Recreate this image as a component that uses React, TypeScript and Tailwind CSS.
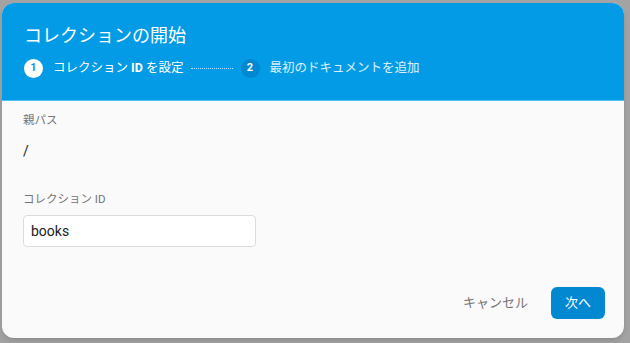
import React from 'react'

const FONT = { fontFamily: 'Roboto, "Noto Sans CJK JP", sans-serif' }

export default function App() {
  return (
    <div className="w-[630px] h-[343px] bg-[#a3a3a3] pt-[3px] pl-[2px]" style={FONT}>
      <div className="w-[622px] h-[335px] rounded-[12px] overflow-hidden bg-[#fafafa] flex flex-col shadow-md">
        {/* Header */}
        <div className="bg-[#039be5] h-[98px] px-[22px] pt-[21px] border-b border-[#4fc3f7]">
          <h1 className="text-white text-[18px] leading-[24px]">コレクションの開始</h1>
          <div className="flex items-center mt-[10px] h-[20px]">
            <span className="w-[19px] h-[19px] rounded-full bg-white text-[#039be5] text-[11px] font-bold flex items-center justify-center">1</span>
            <span className="ml-[10px] text-white text-[12.5px]">
              コレクション <b className="font-bold">ID</b> を設定
            </span>
            <span className="ml-[7px] w-[42px] border-t border-dotted border-[#b3e5fc]" />
            <span className="ml-[8px] w-[19px] h-[19px] rounded-full bg-[#0288d1] text-white text-[11px] font-bold flex items-center justify-center">2</span>
            <span className="ml-[10px] text-white/85 text-[12.5px]">最初のドキュメントを追加</span>
          </div>
        </div>

        {/* Body */}
        <div className="flex-1 px-[21px] pt-[11px] flex flex-col">
          <label className="text-[#757575] text-[11.5px] leading-[16px]">親パス</label>
          <div className="text-[#212121] text-[14px] mt-[14px] leading-[18px]">/</div>
          <label className="text-[#757575] text-[11.5px] leading-[16px] mt-[31px]">コレクション ID</label>
          <div className="mt-[8px] w-[233px] h-[32px] bg-white border border-[#dadce0] rounded-[4px] flex items-center px-[7px]">
            <span className="text-[#212121] text-[14px]">books</span>
          </div>
          <div className="flex justify-end items-center mt-auto mb-[19px] mr-[-2px] gap-[10px]">
            <button className="h-[32px] px-[13px] text-[#757575] text-[13px]">キャンセル</button>
            <button className="h-[32px] w-[54px] rounded-[6px] bg-[#0288d1] text-white text-[13px]">次へ</button>
          </div>
        </div>
      </div>
    </div>
  )
}
